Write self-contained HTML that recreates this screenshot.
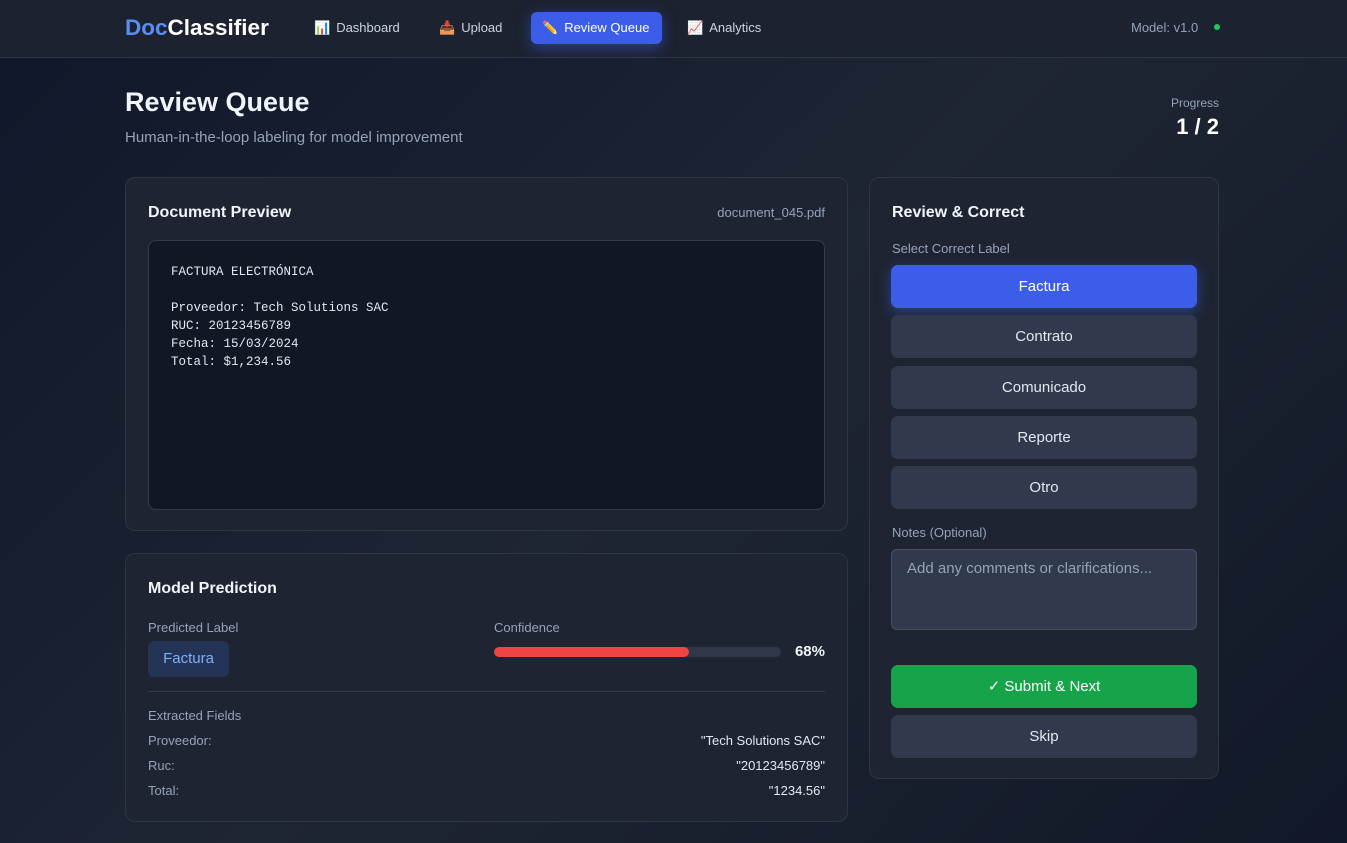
<!DOCTYPE html>
<html><head><meta charset="utf-8"><style>
*{box-sizing:border-box;margin:0;padding:0}
body{width:1347px;height:843px;overflow:hidden;font-family:"Liberation Sans",sans-serif;color:#f1f5f9;background:linear-gradient(135deg,#0f172a 0%,#1e2533 50%,#111827 100%);position:relative}
.nav{height:58px;background:#1c2230;border-bottom:1px solid #2d3544;position:relative}
.logo{position:absolute;left:125px;top:15px;font-size:22.5px;font-weight:bold;color:#fff}
.logo span{color:#5b8def}
.nl{position:absolute;top:12px;height:32px;line-height:32px;font-size:13px;color:#cbd5e1;padding:0 11px;border-radius:6px}
.nl i{font-style:normal;margin-right:6px}
.act{background:#3b5de7;color:#fff;box-shadow:0 4px 14px rgba(59,93,231,.5)}
.model{position:absolute;top:20px;font-size:13px;color:#94a3b8}
.dot{position:absolute;right:127px;top:24px;width:6px;height:6px;border-radius:50%;background:#22c55e}
h1{position:absolute;left:125px;top:87px;font-size:27px;font-weight:bold}
.sub{position:absolute;left:125px;top:129px;font-size:15px;color:#94a3b8}
.prog{position:absolute;right:128px;top:96px;text-align:right;font-size:12px;color:#94a3b8}
.prog b{display:block;font-size:22px;color:#fff;margin-top:4px}
.card{position:absolute;background:#1e2432;border:1px solid #2e3646;border-radius:10px}
.ct{position:absolute;left:22px;top:26px;font-size:16px;font-weight:bold}
.pre{position:absolute;left:22px;top:62px;width:677px;height:270px;background:#121725;border:1px solid #343c4c;border-radius:8px;padding:22px;font-family:"Liberation Mono",monospace;font-size:12.5px;line-height:18px;color:#e2e8f0;white-space:pre}
.lbl{font-size:13px;color:#94a3b8;position:absolute}
.btn{position:absolute;left:21px;width:306px;height:43px;border-radius:7px;background:#303a4c;color:#e2e8f0;font-size:15px;text-align:center;line-height:43px}
.row{position:absolute;left:22px;width:677px;font-size:13px;color:#94a3b8}
.row span{float:right;color:#e2e8f0}
</style></head><body>
<div class="nav">
<div class="logo"><span>Doc</span>Classifier</div>
<div class="nl" style="left:303px"><i>📊</i>Dashboard</div>
<div class="nl" style="left:428px"><i>📥</i>Upload</div>
<div class="nl act" style="left:531px;width:131px"><i>✏️</i>Review Queue</div>
<div class="nl" style="left:676px"><i>📈</i>Analytics</div>
<div class="model" style="left:1131px">Model: v1.0</div><div class="dot"></div>
</div>
<h1>Review Queue</h1>
<div class="sub">Human-in-the-loop labeling for model improvement</div>
<div class="prog">Progress<b>1 / 2</b></div>

<div class="card" style="left:125px;top:177px;width:723px;height:354px">
<div class="ct">Document Preview</div>
<div style="position:absolute;right:22px;top:27px;font-size:13px;color:#94a3b8">document_045.pdf</div>
<div class="pre">FACTURA ELECTRÓNICA

Proveedor: Tech Solutions SAC
RUC: 20123456789
Fecha: 15/03/2024
Total: $1,234.56</div>
</div>

<div class="card" style="left:125px;top:553px;width:723px;height:269px">
<div class="ct" style="top:26px">Model Prediction</div>
<div class="lbl" style="left:22px;top:66px">Predicted Label</div>
<div style="position:absolute;left:22px;top:87px;width:81px;height:36px;background:#233456;border-radius:6px;color:#7fb0f5;font-size:15px;text-align:center;line-height:36px">Factura</div>
<div class="lbl" style="left:368px;top:66px">Confidence</div>
<div style="position:absolute;left:368px;top:93px;width:287px;height:10px;background:#2f3748;border-radius:5px"><div style="width:195px;height:10px;background:#ef4444;border-radius:5px"></div></div>
<div style="position:absolute;right:22px;top:89px;font-size:15px;font-weight:bold">68%</div>
<div style="position:absolute;left:22px;top:137px;width:677px;height:1px;background:#343c4c"></div>
<div class="lbl" style="left:22px;top:154px">Extracted Fields</div>
<div class="row" style="top:179px">Proveedor:<span>"Tech Solutions SAC"</span></div>
<div class="row" style="top:204px">Ruc:<span>"20123456789"</span></div>
<div class="row" style="top:229px">Total:<span>"1234.56"</span></div>
</div>

<div class="card" style="left:869px;top:177px;width:350px;height:602px">
<div class="ct">Review &amp; Correct</div>
<div class="lbl" style="left:22px;top:63px">Select Correct Label</div>
<div class="btn" style="top:87px;background:#3b5de7;color:#fff;box-shadow:0 4px 14px rgba(59,93,231,.5)">Factura</div>
<div class="btn" style="top:137px">Contrato</div>
<div class="btn" style="top:188px">Comunicado</div>
<div class="btn" style="top:238px">Reporte</div>
<div class="btn" style="top:288px">Otro</div>
<div class="lbl" style="left:22px;top:347px">Notes (Optional)</div>
<div style="position:absolute;left:21px;top:371px;width:306px;height:81px;background:#303a4c;border:1px solid #475063;border-radius:6px;padding:10px 15px;font-size:15px;color:#94a3b8">Add any comments or clarifications...</div>
<div class="btn" style="top:487px;background:#16a34a;color:#fff">✓ Submit &amp; Next</div>
<div class="btn" style="top:537px">Skip</div>
</div>
</body></html>
